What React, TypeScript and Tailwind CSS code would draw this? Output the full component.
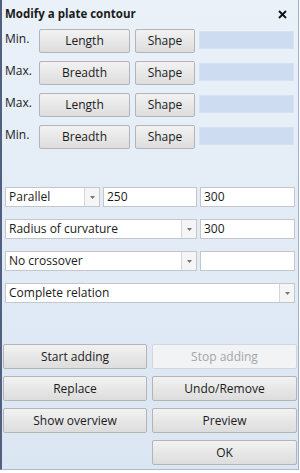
import React from "react";

const font = { fontFamily: '"Open Sans", "DejaVu Sans", sans-serif' };

function Btn({ children, w, disabled }: { children: React.ReactNode; w: string; disabled?: boolean }) {
  return (
    <div
      className={`${w} h-[25px] flex items-center justify-center rounded-[2px] border text-[12px] leading-none ${
        disabled
          ? "border-[#d3d6da] bg-[#f2f3f4] text-[#a3a6aa]"
          : "border-[#b4b4b4] bg-gradient-to-b from-[#f2f2f2] to-[#dddddd] text-[#1b1b1b]"
      }`}
    >
      {children}
    </div>
  );
}

function Field({ w, children }: { w: string; children?: React.ReactNode }) {
  return (
    <div className={`${w} h-[20px] flex items-center border border-[#c3c6cb] bg-white px-[3px] text-[12px] text-[#1b1b1b]`}>
      {children}
    </div>
  );
}

function Select({ w, children }: { w: string; children: React.ReactNode }) {
  return (
    <div className={`${w} h-[20px] flex border border-[#c3c6cb] bg-white text-[12px] text-[#1b1b1b]`}>
      <div className="flex-1 flex items-center px-[3px] whitespace-nowrap overflow-hidden">{children}</div>
      <div className="w-[15px] border-l border-[#d4d6d9] bg-[#f5f5f5] flex items-center justify-center">
        <svg width="5" height="3" viewBox="0 0 5 3">
          <path d="M0 0H5L2.5 3Z" fill="#777" />
        </svg>
      </div>
    </div>
  );
}

function SizeRow({ label, main }: { label: string; main: string }) {
  return (
    <div className="flex items-start h-[24px]">
      <div className="w-[37px] pl-[3px] pt-[3px] text-[12px] leading-[14px] text-[#1b1b1b]">{label}</div>
      <div className="w-[91px] h-[24px] flex items-center justify-center rounded-[2px] border border-[#b4b4b4] bg-gradient-to-b from-[#f2f2f2] to-[#dddddd] text-[12px] text-[#1b1b1b]">
        {main}
      </div>
      <div className="ml-[5px] w-[60px] h-[24px] flex items-center justify-center rounded-[2px] border border-[#b4b4b4] bg-gradient-to-b from-[#f2f2f2] to-[#dddddd] text-[12px] text-[#1b1b1b]">
        Shape
      </div>
      <div className="ml-[4px] mt-[2px] w-[95px] h-[18px] bg-[#cddcf1] border border-[#d6e2f2]" />
    </div>
  );
}

export default function App() {
  return (
    <div style={font} className="w-[300px] h-[473px] bg-white">
      <div className="w-[299px] h-[470px] border-l-2 border-[#50607e] border-r border-r-[#9fb0ca] border-b border-b-[#a9bad2] bg-gradient-to-b from-[#eaf1f9] to-[#dbe6f3] flex flex-col">
        <div className="h-[27px] flex items-center justify-between pl-[3px] pr-[11px]">
          <span className="text-[11.5px] font-bold text-[#1b1b1b]">Modify a plate contour</span>
          <svg width="9" height="9" viewBox="0 0 9 9" className="mt-[1px]">
            <path d="M1 1L8 8M8 1L1 8" stroke="#111" strokeWidth="1.8" />
          </svg>
        </div>
        <div className="mt-[2px] flex flex-col gap-[8px]">
          <SizeRow label="Min." main="Length" />
          <SizeRow label="Max." main="Breadth" />
          <SizeRow label="Max." main="Length" />
          <SizeRow label="Min." main="Breadth" />
        </div>
        <div className="mt-[38px] pl-[3px] flex flex-col gap-[12px]">
          <div className="flex gap-[3px]">
            <Select w="w-[95px]">Parallel</Select>
            <Field w="w-[94px]">250</Field>
            <Field w="w-[95px]">300</Field>
          </div>
          <div className="flex gap-[3px]">
            <Select w="w-[192px]">Radius of curvature</Select>
            <Field w="w-[95px]">300</Field>
          </div>
          <div className="flex gap-[3px]">
            <Select w="w-[192px]">No crossover</Select>
            <Field w="w-[95px]" />
          </div>
          <div className="flex">
            <Select w="w-[290px]">Complete relation</Select>
          </div>
        </div>
        <div className="mt-[41px] pl-[1px] grid grid-cols-[144px_145px] gap-x-[5px] gap-y-[7px]">
          <Btn w="w-[144px]">Start adding</Btn>
          <Btn w="w-[145px]" disabled>Stop adding</Btn>
          <Btn w="w-[144px]">Replace</Btn>
          <Btn w="w-[145px]">Undo/Remove</Btn>
          <Btn w="w-[144px]">Show overview</Btn>
          <Btn w="w-[145px]">Preview</Btn>
          <div />
          <Btn w="w-[145px]">OK</Btn>
        </div>
      </div>
    </div>
  );
}
